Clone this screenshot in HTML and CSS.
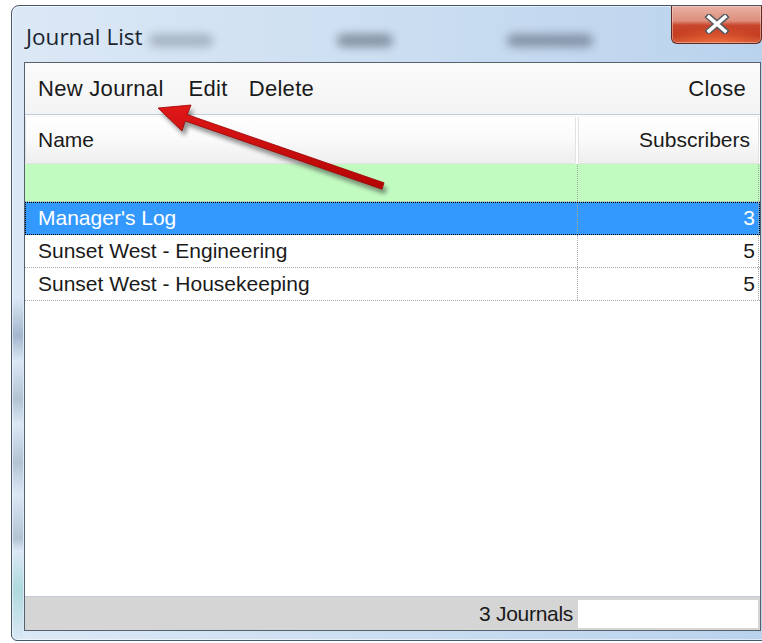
FILE: index.html
```html
<!DOCTYPE html>
<html lang="en">
<head>
<meta charset="utf-8">
<title>Journal List</title>
<link rel="stylesheet" href="styles.css">
</head>
<body>
<div class="window">
  <div class="titlebar">
    <span class="title">Journal List</span>
    <span class="ghost ghost-a"></span>
    <span class="ghost ghost-b"></span>
    <span class="ghost ghost-c"></span>
    <button class="close-btn" aria-label="Close">
      <svg width="26" height="20" viewBox="0 0 26 20">
        <path d="M5 3 L21 17 M21 3 L5 17" stroke="#555a60" stroke-width="6.5" stroke-linecap="square" fill="none"/>
        <path d="M5 3 L21 17 M21 3 L5 17" stroke="#ffffff" stroke-width="3.6" stroke-linecap="square" fill="none"/>
      </svg>
    </button>
  </div>

  <div class="client">
    <div class="toolbar">
      <span class="tool">New Journal</span>
      <span class="tool">Edit</span>
      <span class="tool">Delete</span>
      <span class="tool tool-right">Close</span>
    </div>

    <div class="header">
      <div class="hcell hcell-name">Name</div>
      <div class="hcell hcell-subs">Subscribers</div>
    </div>

    <div class="grid">
      <div class="row row-new">
        <div class="cell"></div>
        <div class="cell num"></div>
      </div>
      <div class="row row-selected">
        <div class="cell">Manager's Log</div>
        <div class="cell num">3</div>
      </div>
      <div class="row">
        <div class="cell">Sunset West - Engineering</div>
        <div class="cell num">5</div>
      </div>
      <div class="row">
        <div class="cell">Sunset West - Housekeeping</div>
        <div class="cell num">5</div>
      </div>
    </div>

    <div class="statusbar">
      <span class="count">3 Journals</span>
      <span class="status-box"></span>
    </div>
  </div>
</div>

<svg class="pointer" width="762" height="643" viewBox="0 0 762 643">
  <defs>
    <filter id="soft" x="-10%" y="-30%" width="120%" height="160%">
      <feGaussianBlur stdDeviation="2.2"/>
    </filter>
    <linearGradient id="redfill" x1="0" y1="0" x2="0" y2="1">
      <stop offset="0" stop-color="#e01818"/>
      <stop offset="1" stop-color="#b40404"/>
    </linearGradient>
  </defs>
  <g transform="translate(3 5)" filter="url(#soft)" opacity="0.55">
    <polygon points="158,108 191,105 187.2,114.6 384,182.8 382,189.2 185.2,121 182,131" fill="#3a3a3a"/>
  </g>
  <polygon points="158,108 191,105 187.2,114.6 384,182.8 382,189.2 185.2,121 182,131" fill="url(#redfill)" stroke="#9a0202" stroke-width="0.8" stroke-linejoin="round"/>
</svg>
</body>
</html>
```

FILE: styles.css
```css
html, body {
  margin: 0;
  width: 762px;
  height: 643px;
  overflow: hidden;
  background: #ffffff;
}

body {
  position: relative;
  font-family: "Liberation Sans", Arial, sans-serif;
  color: #1a1a1a;
}

/* Aero-style window frame */
.window {
  box-sizing: border-box;
  width: 763px;
  height: 636px;
  margin: 5px 0 0 11px;
  padding: 0 12px 9px 12px;
  border: 1px solid #48566a;
  border-radius: 8px 8px 6px 6px;
  display: flex;
  flex-direction: column;
  background:
    linear-gradient(180deg,
      rgba(0,0,0,0) 0%, rgba(0,0,0,0) 46%,
      rgba(60,90,130,0.35) 52%, rgba(0,0,0,0) 56%,
      rgba(90,110,130,0.3) 62%, rgba(0,0,0,0) 66%,
      rgba(90,110,130,0.3) 72%, rgba(0,0,0,0) 77%,
      rgba(90,110,130,0.3) 84%, rgba(0,0,0,0) 86%,
      rgba(120,200,190,0.45) 92%, rgba(0,0,0,0) 100%) no-repeat 0 0 / 11px 100%,
    linear-gradient(90deg, #dbe8f6 0%, #cfe0f2 40%, #c2d8ef 75%, #b9d2ec 100%);
  box-shadow: inset 0 0 0 1px rgba(255,255,255,0.55);
}

.titlebar {
  height: 56px;
  display: flex;
  align-items: flex-start;
  flex: none;
}

.title {
  margin: 18px 0 0 2px;
  font-family: "Open Sans", "Noto Sans", sans-serif;
  font-size: 22.5px;
  line-height: 26px;
  color: #1c2530;
  white-space: nowrap;
}

.ghost {
  height: 13px;
  margin-top: 28px;
  border-radius: 6px;
  background: rgba(70, 80, 95, 0.6);
  filter: blur(5px);
}
.ghost-a { width: 64px; margin-left: 6px; opacity: 0.55; }
.ghost-b { width: 56px; margin-left: 124px; opacity: 0.9; }
.ghost-c { width: 86px; margin-left: 114px; opacity: 0.85; }

.close-btn {
  margin-left: auto;
  margin-right: -1px;
  width: 91px;
  height: 38px;
  padding: 0;
  box-sizing: border-box;
  border: 1px solid #5b2a22;
  border-top: none;
  border-radius: 0 0 6px 6px;
  display: flex;
  align-items: center;
  justify-content: center;
  background:
    radial-gradient(ellipse 60% 45% at 50% 100%, rgba(240,110,60,0.85), rgba(240,110,60,0) 100%),
    linear-gradient(180deg, #e9b1a5 0%, #dd8e7c 40%, #c8462c 52%, #c23a1f 80%, #cf5535 100%);
  box-shadow: inset 0 0 0 1px rgba(255,220,210,0.45);
}
.close-btn svg { display: block; margin-top: -2px; }

/* client area */
.client {
  flex: 1;
  display: flex;
  flex-direction: column;
  border: 1px solid #56616c;
  background: #ffffff;
  min-height: 0;
}

.toolbar {
  flex: none;
  height: 51px;
  display: flex;
  align-items: center;
  padding: 0 14px 0 13px;
  border-bottom: 1px solid #bfcedd;
  background: linear-gradient(180deg, #fbfbfb 0%, #f3f3f3 100%);
  font-size: 22px;
  letter-spacing: 0.3px;
}
.tool { margin-right: 21px; color: #1a1a1a; }
.tool:first-child { margin-right: 25px; }
.tool-right { margin-left: auto; margin-right: 0; }

.header {
  flex: none;
  height: 48px;
  display: grid;
  grid-template-columns: 551px 181px;
  column-gap: 2px;
  padding: 1px 0 0 0;
  font-size: 21px;
}
.hcell {
  display: flex;
  align-items: center;
  padding: 0 0 0 12px;
  border: 1px solid #e2e2e2;
  border-top-color: #f4f4f4;
  border-radius: 2px;
  background: linear-gradient(180deg, #ffffff 0%, #fafafa 50%, #eeeeee 100%);
}
.hcell-subs {
  justify-content: flex-end;
  padding: 0 8px 0 0;
}

.grid {
  flex: 1;
  font-size: 21px;
}

.row {
  display: grid;
  grid-template-columns: 553px 181px;
  height: 33px;
  box-sizing: border-box;
  border-bottom: 1px dotted #a9a9a9;
}
.row-new {
  height: 38px;
  background: #c1fbc0;
}
.row-selected {
  background: #3399ff;
  color: #ffffff;
  outline: 1px dotted #000000;
  outline-offset: -1px;
}

.cell {
  display: flex;
  align-items: center;
  padding: 0 0 0 13px;
  border-right: 1px dotted #a9a9a9;
  white-space: nowrap;
}
.cell.num {
  justify-content: flex-end;
  padding: 0 3px 0 0;
}

.statusbar {
  flex: none;
  height: 33px;
  display: flex;
  align-items: center;
  justify-content: flex-end;
  gap: 5px;
  padding: 0 2px 0 0;
  border-top: 1px solid #c3ccd6;
  background: #d5d5d5;
  font-size: 21px;
}
.count { letter-spacing: -0.3px; }
.status-box {
  width: 180px;
  height: 28px;
  background: #ffffff;
}

/* annotation arrow drawn over the window */
.pointer {
  position: absolute;
  left: 0;
  top: 0;
  pointer-events: none;
}
```
